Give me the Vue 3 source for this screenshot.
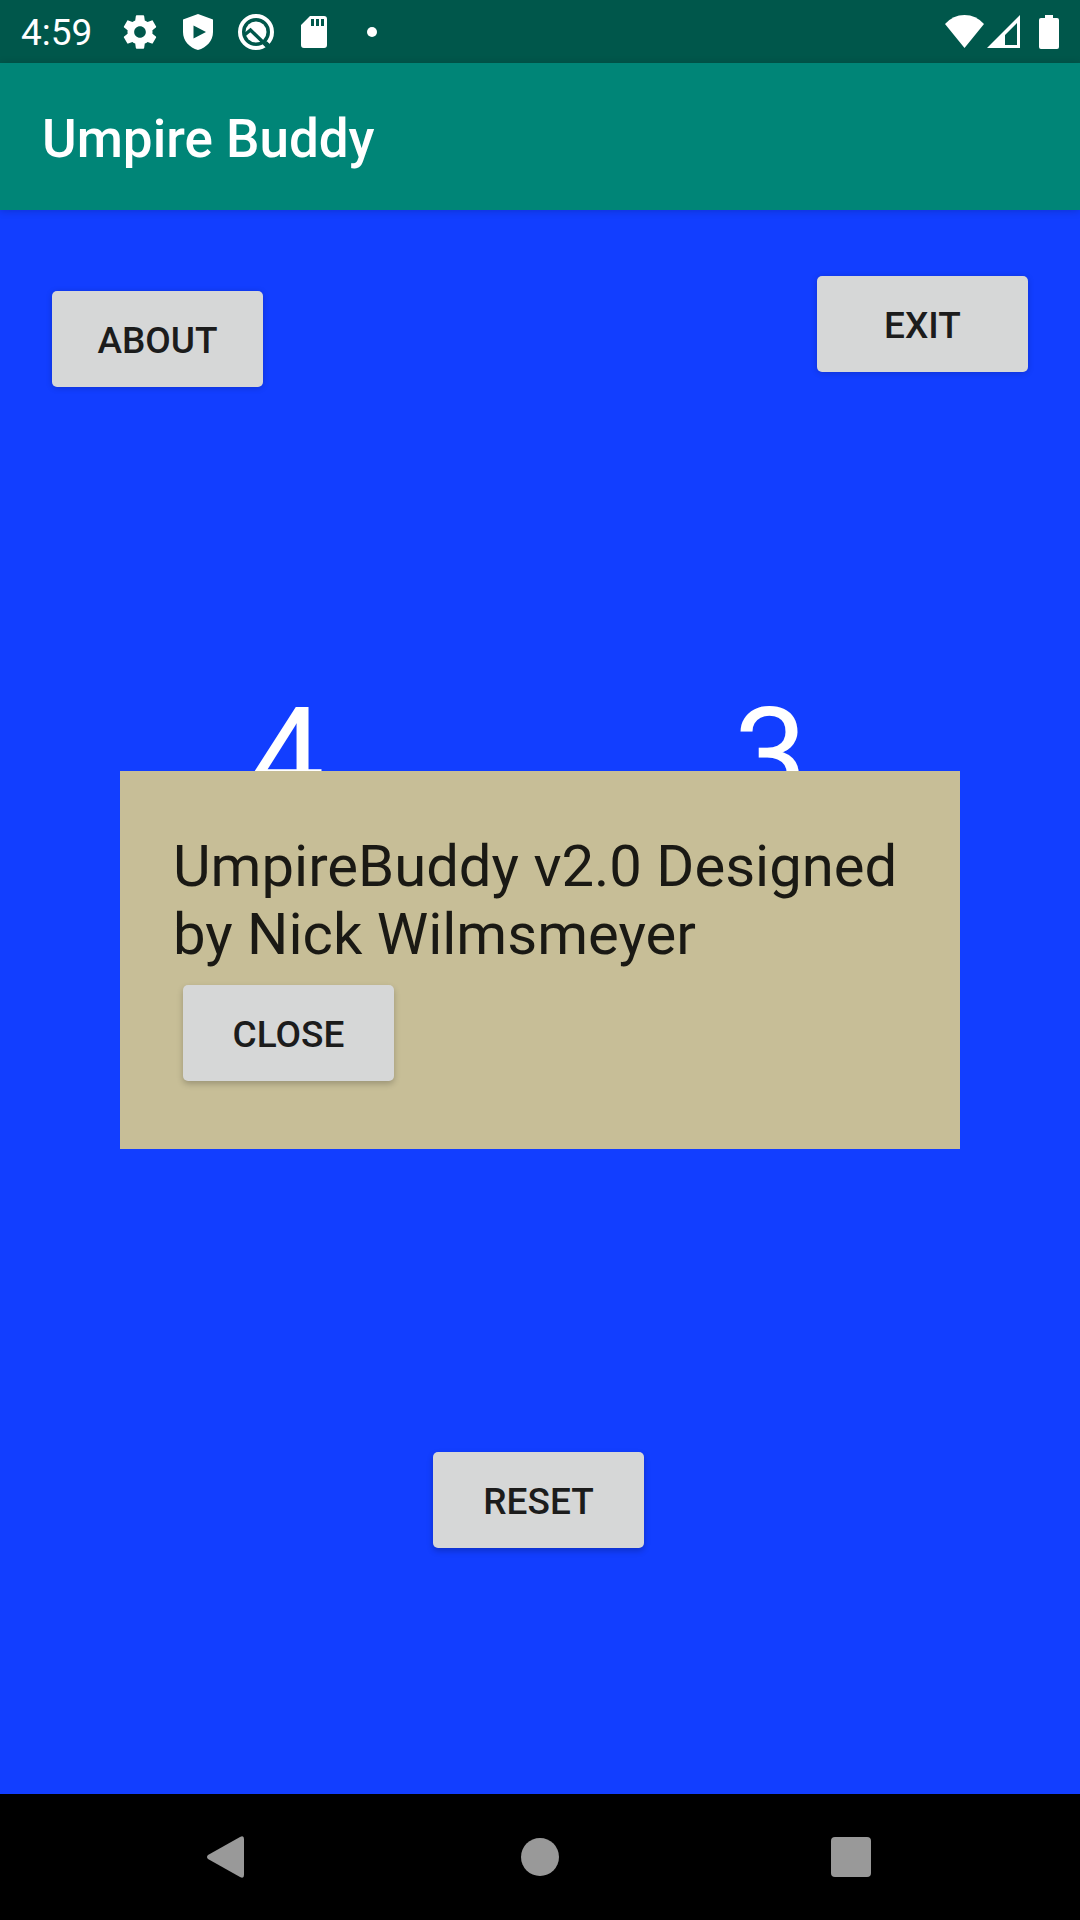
<script setup>
import { ref } from 'vue'

const balls = ref(4)
const strikes = ref(3)
const aboutOpen = ref(true)

function reset() {
  balls.value = 0
  strikes.value = 0
}
</script>

<template>
  <div class="screen">
    <header class="status">
      <time class="clock">4:59</time>
      <div class="notices">
        <svg viewBox="0 0 24 24" aria-label="Settings">
          <path d="M19.43 12.98c.04-.32.07-.64.07-.98s-.03-.66-.07-.98l2.11-1.65c.19-.15.24-.42.12-.64l-2-3.46c-.12-.22-.39-.3-.61-.22l-2.49 1c-.52-.4-1.08-.73-1.69-.98l-.38-2.65C14.46 2.18 14.25 2 14 2h-4c-.25 0-.46.18-.49.42l-.38 2.65c-.61.25-1.17.59-1.69.98l-2.49-1c-.23-.09-.49 0-.61.22l-2 3.46c-.13.22-.07.49.12.64l2.11 1.65c-.04.32-.07.65-.07.98s.03.66.07.98l-2.11 1.65c-.19.15-.24.42-.12.64l2 3.46c.12.22.39.3.61.22l2.49-1c.52.4 1.08.73 1.69.98l.38 2.65c.03.24.24.42.49.42h4c.25 0 .46-.18.49-.42l.38-2.65c.61-.25 1.17-.59 1.69-.98l2.49 1c.23.09.49 0 .61-.22l2-3.46c.12-.22.07-.49-.12-.64l-2.11-1.65zM12 15.500c-1.930 0-3.500-1.570-3.500-3.500s1.570-3.500 3.500-3.500 3.500 1.570 3.500 3.500-1.570 3.500-3.500 3.500z" />
        </svg>
        <svg viewBox="0 0 40 40" aria-label="Play Protect">
          <path fill-rule="evenodd" d="M20 2L35 7.500V20C35 29 28.500 35.500 20 38C11.500 35.500 5 29 5 20V7.500zM15.500 13.500V26.500L28 20z" />
        </svg>
        <svg viewBox="0 0 40 40" aria-label="System update">
          <circle cx="20" cy="20" r="16" fill="none" stroke="#fff" stroke-width="4" />
          <circle cx="20" cy="20" r="10.500" />
          <path d="M9 22.500L14.500 18L32 35" fill="none" stroke="#00574b" stroke-width="3.500" />
          <path d="M29 31L32 34" stroke="#00574b" stroke-width="5" />
          <path d="M30 30L35 35" stroke="#00574b" stroke-width="2" />
        </svg>
        <svg viewBox="0 0 40 40" aria-label="SD card">
          <path fill-rule="evenodd" d="M16 4H30Q33 4 33 7V33Q33 36 30 36H10Q7 36 7 33V13zM17 7V14H20V7zM22 7V14H25V7zM27 7V14H30V7z" />
        </svg>
        <svg viewBox="0 0 40 40" aria-label="More notifications">
          <circle cx="20" cy="20" r="5" />
        </svg>
      </div>
      <div class="system">
        <svg width="39" height="34" viewBox="0 0 39 34" aria-label="Wi-Fi">
          <path d="M0 9Q8 0 19.500 0T39 9L19.500 33z" />
        </svg>
        <svg width="33" height="34" viewBox="0 0 33 34" aria-label="Mobile signal">
          <path fill-rule="evenodd" d="M33 0V33H0zM30 8L18 20V30H30z" />
        </svg>
        <svg class="battery" width="20" height="34" viewBox="0 0 20 34" aria-label="Battery">
          <path d="M6 0H14V3H18Q20 3 20 5V32Q20 34 18 34H2Q0 34 0 32V5Q0 3 2 3H6z" />
        </svg>
      </div>
    </header>

    <div class="appbar">
      <h1>Umpire Buddy</h1>
    </div>

    <main class="board">
      <div class="actions">
        <button class="btn about" type="button" @click="aboutOpen = true">ABOUT</button>
        <button class="btn" type="button">EXIT</button>
      </div>
      <div class="counts">
        <output>{{ balls }}</output>
        <output>{{ strikes }}</output>
      </div>
      <div class="footer">
        <button class="btn" type="button" @click="reset">RESET</button>
      </div>
    </main>

    <nav class="navbar">
      <button type="button" aria-label="Back">
        <svg viewBox="0 0 64 64">
          <path d="M43 12Q47 10 47 14V50Q47 54 43 52L11 34Q9 32 11 30z" />
        </svg>
      </button>
      <button type="button" aria-label="Home">
        <svg viewBox="0 0 64 64"><circle cx="32" cy="32" r="19" /></svg>
      </button>
      <button type="button" aria-label="Recent apps">
        <svg viewBox="0 0 64 64"><rect x="12" y="12" width="40" height="40" rx="4" /></svg>
      </button>
    </nav>

    <div v-if="aboutOpen" class="overlay">
      <section class="dialog" role="dialog" aria-labelledby="about-text">
        <p id="about-text">UmpireBuddy v2.0 Designed by Nick Wilmsmeyer</p>
        <button class="btn" type="button" @click="aboutOpen = false">CLOSE</button>
      </section>
    </div>
  </div>
</template>

<style>
body {
  margin: 0;
  background: #000;
}
</style>

<style scoped>
.screen {
  display: flex;
  flex-direction: column;
  min-height: 100vh;
  background: #123eff;
  color: #fff;
  font-family: Roboto, "Liberation Sans", sans-serif;
}

svg {
  display: block;
  fill: #fff;
}

.status {
  display: flex;
  align-items: center;
  box-sizing: border-box;
  height: 63px;
  padding: 0 21px;
  background: #00574b;
}

.clock {
  padding-top: 2px;
  font-size: 37px;
  line-height: 44px;
}

.notices {
  display: flex;
  gap: 18px;
  margin-left: 28px;
}

.notices svg {
  width: 40px;
  height: 40px;
}

.system {
  display: flex;
  gap: 3px;
  margin-left: auto;
}

.battery {
  margin-left: 16px;
}

.appbar {
  display: flex;
  align-items: center;
  box-sizing: border-box;
  height: 147px;
  padding: 4px 42px 0;
  background: #008577;
  box-shadow: 0 1px 8px rgba(0, 0, 0, 0.18);
}

h1 {
  margin: 0;
  font-size: 53px;
  font-weight: 500;
  line-height: 62px;
}

.board {
  flex: 1;
  display: grid;
  grid-template-rows: auto 292fr auto 619fr auto 246fr;
  padding-top: 66px;
}

.actions {
  display: flex;
  justify-content: space-between;
  align-items: flex-start;
  padding: 0 52px;
}

.about {
  margin-top: 15px;
}

.counts {
  grid-row: 3;
  display: grid;
  grid-template-columns: 1fr 1fr;
  padding: 0 68px 0 46px;
  font-size: 131px;
  line-height: 154px;
  text-align: center;
}

.footer {
  grid-row: 5;
  display: flex;
  justify-content: center;
  padding-right: 3px;
}

.btn {
  width: 211px;
  height: 96px;
  padding: 3px 0 0;
  border: 0;
  border-radius: 5px;
  background: #d6d7d7;
  box-shadow: 0 3px 6px rgba(0, 0, 0, 0.22);
  color: #1c1c1c;
  font-family: inherit;
  font-size: 37px;
  font-weight: 500;
  line-height: 44px;
}

.actions .btn {
  box-shadow: 0 1px 6px rgba(0, 0, 0, 0.18);
}

.navbar {
  display: grid;
  grid-template-columns: repeat(3, 1fr);
  justify-items: center;
  align-items: center;
  height: 126px;
  padding: 0 73px;
  background: #000;
}

.navbar button {
  padding: 0;
  border: 0;
  background: none;
}

.navbar svg {
  width: 64px;
  height: 64px;
  fill: #999;
}

.overlay {
  position: fixed;
  inset: 0;
  display: flex;
  align-items: center;
  padding: 0 120px;
}

.dialog {
  flex: 1;
  padding: 61px 53px 68px;
  background: #c7be97;
}

.dialog p {
  margin: 0 0 17px;
  color: #1a1914;
  font-size: 58px;
  line-height: 68px;
}

.dialog .btn {
  display: block;
  margin-left: 10px;
}
</style>
